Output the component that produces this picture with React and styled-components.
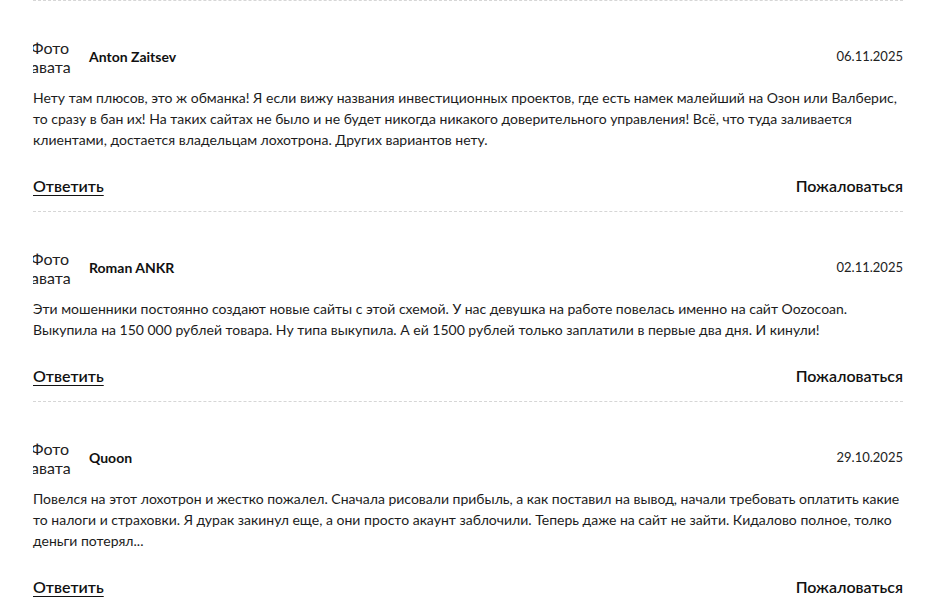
import React from "react";
import styled, { createGlobalStyle } from "styled-components";

const GlobalStyle = createGlobalStyle`
    body {
        margin: 0;
        background: #fff;
        font-family: Lato, "Noto Sans", sans-serif;
        color: #1a1a1a;
    }
`;

const Page = styled.div`
    padding: 0 23px 0 33px;
`;

const Comment = styled.div`
    border-top: 1px dashed #d6d6d6;
    padding: 37px 0 15px;
`;

const Header = styled.div`
    display: flex;
    align-items: center;
    height: 36px;
`;

const Avatar = styled.div`
    width: 38px;
    height: 36px;
    overflow: hidden;
    display: flex;
    flex-direction: column;
    font-size: 16px;
    line-height: 19px;
    color: #222;
    white-space: nowrap;
    flex-shrink: 0;

    span {
        margin-left: -2px;
    }
`;

const Name = styled.div`
    margin-left: 18px;
    font-size: 14px;
    font-weight: 700;
    color: #111;
`;

const Date = styled.div`
    margin-left: auto;
    font-size: 13px;
    color: #222;
`;

const Body = styled.p`
    margin: 13px 0 0;
    font-size: 14px;
    line-height: 21px;
    color: #1c1c1c;
`;

const Actions = styled.div`
    display: flex;
    justify-content: space-between;
    margin-top: 25px;
    font-size: 16px;
    line-height: 21px;
    font-weight: 600;
`;

const Action = styled.a`
    color: #111;
    text-decoration: ${props => props.underline ? "underline" : "none"};
    text-underline-offset: 3px;
    cursor: pointer;
`;

const comments = [
    {
        name: "Anton Zaitsev",
        date: "06.11.2025",
        text: "Нету там плюсов, это ж обманка! Я если вижу названия инвестиционных проектов, где есть намек малейший на Озон или Валберис, то сразу в бан их! На таких сайтах не было и не будет никогда никакого доверительного управления! Всё, что туда заливается клиентами, достается владельцам лохотрона. Других вариантов нету.",
    },
    {
        name: "Roman ANKR",
        date: "02.11.2025",
        text: "Эти мошенники постоянно создают новые сайты с этой схемой. У нас девушка на работе повелась именно на сайт Oozocoan. Выкупила на 150 000 рублей товара. Ну типа выкупила. А ей 1500 рублей только заплатили в первые два дня. И кинули!",
    },
    {
        name: "Quoon",
        date: "29.10.2025",
        text: "Повелся на этот лохотрон и жестко пожалел. Сначала рисовали прибыль, а как поставил на вывод, начали требовать оплатить какие то налоги и страховки. Я дурак закинул еще, а они просто акаунт заблочили. Теперь даже на сайт не зайти. Кидалово полное, толко деньги потерял...",
    },
];

export default function App() {
    return (
        <Page>
            <GlobalStyle />
            {comments.map((c, i) => (
                <Comment key={i}>
                    <Header>
                        <Avatar>
                            <span>Фото</span>
                            <span>аватара</span>
                        </Avatar>
                        <Name>{c.name}</Name>
                        <Date>{c.date}</Date>
                    </Header>
                    <Body>{c.text}</Body>
                    <Actions>
                        <Action underline>Ответить</Action>
                        <Action>Пожаловаться</Action>
                    </Actions>
                </Comment>
            ))}
        </Page>
    );
}
